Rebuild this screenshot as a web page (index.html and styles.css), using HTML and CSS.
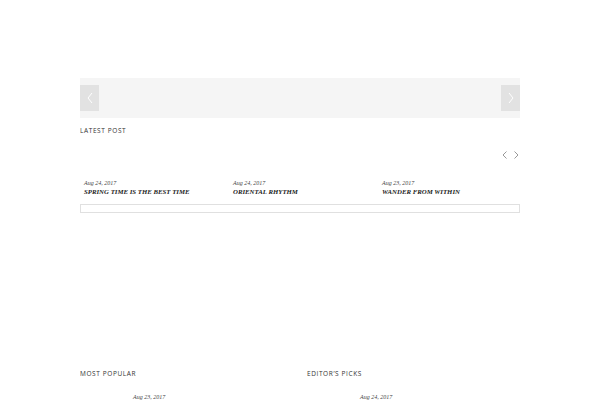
FILE: index.html
```html
<!DOCTYPE html>
<html>
<head>
<meta charset="utf-8">
<link rel="stylesheet" href="styles.css">
</head>
<body>
<div class="wrap">
  <div class="slider">
    <div class="sbtn"><svg width="8" height="12" viewBox="0 0 8 12"><path d="M6 1 L2 6 L6 11" fill="none" stroke="#fff" stroke-width="1"/></svg></div>
    <div class="sbtn"><svg width="8" height="12" viewBox="0 0 8 12"><path d="M2 1 L6 6 L2 11" fill="none" stroke="#fff" stroke-width="1"/></svg></div>
  </div>
  <div class="label latest">LATEST POST</div>
  <div class="nav">
    <svg width="5" height="8" viewBox="0 0 5 8"><path d="M4.5 0.5 L1 4 L4.5 7.5" fill="none" stroke="#999" stroke-width="1"/></svg>
    <svg width="5" height="8" viewBox="0 0 5 8"><path d="M0.5 0.5 L4 4 L0.5 7.5" fill="none" stroke="#999" stroke-width="1"/></svg>
  </div>
  <div class="posts">
    <div class="post"><div class="date">Aug 24, 2017</div><div class="title">SPRING TIME IS THE BEST TIME</div></div>
    <div class="post"><div class="date">Aug 24, 2017</div><div class="title">ORIENTAL RHYTHM</div></div>
    <div class="post"><div class="date">Aug 23, 2017</div><div class="title">WANDER FROM WITHIN</div></div>
  </div>
  <div class="box"></div>
  <div class="cols">
    <div class="col">
      <div class="label">MOST POPULAR</div>
      <div class="item"><div class="thumb"></div><div class="date">Aug 23, 2017</div></div>
    </div>
    <div class="col">
      <div class="label">EDITOR’S PICKS</div>
      <div class="item"><div class="thumb"></div><div class="date">Aug 24, 2017</div></div>
    </div>
  </div>
</div>
</body>
</html>
```

FILE: styles.css
```css
html, body { margin: 0; padding: 0; background: #fff; }
body { overflow: hidden; height: 400px; }
.wrap { width: 440px; margin-left: 80px; padding-top: 78px; }
.slider { height: 40px; background: #f5f5f5; display: flex; justify-content: space-between; align-items: center; }
.sbtn { width: 19px; height: 26px; background: #e2e2e2; display: flex; align-items: center; justify-content: center; }
.label { font-family: "Open Sans", sans-serif; font-size: 6.5px; letter-spacing: 0.6px; color: #333; line-height: 10px; white-space: nowrap; }
.latest { margin-top: 8px; }
.nav { display: flex; justify-content: flex-end; gap: 7px; padding-right: 1px; margin-top: 14px; height: 10px; align-items: center; }
.posts { display: flex; margin-top: 19px; padding-left: 4px; }
.post { width: 149px; flex-shrink: 0; }
.date { font-family: "Liberation Serif", serif; font-style: italic; font-size: 6px; color: #444; line-height: 8px; white-space: nowrap; }
.title { font-family: "Liberation Serif", serif; font-style: italic; font-weight: bold; font-size: 6.8px; color: #222; line-height: 10px; white-space: nowrap; }
.box { height: 7px; border: 1px solid #e0e0e0; margin-top: 7px; }
.cols { display: flex; margin-top: 156px; }
.col { width: 227px; flex-shrink: 0; }
.item { display: flex; margin-top: 14px; }
.thumb { width: 53px; height: 1px; flex-shrink: 0; }
```
